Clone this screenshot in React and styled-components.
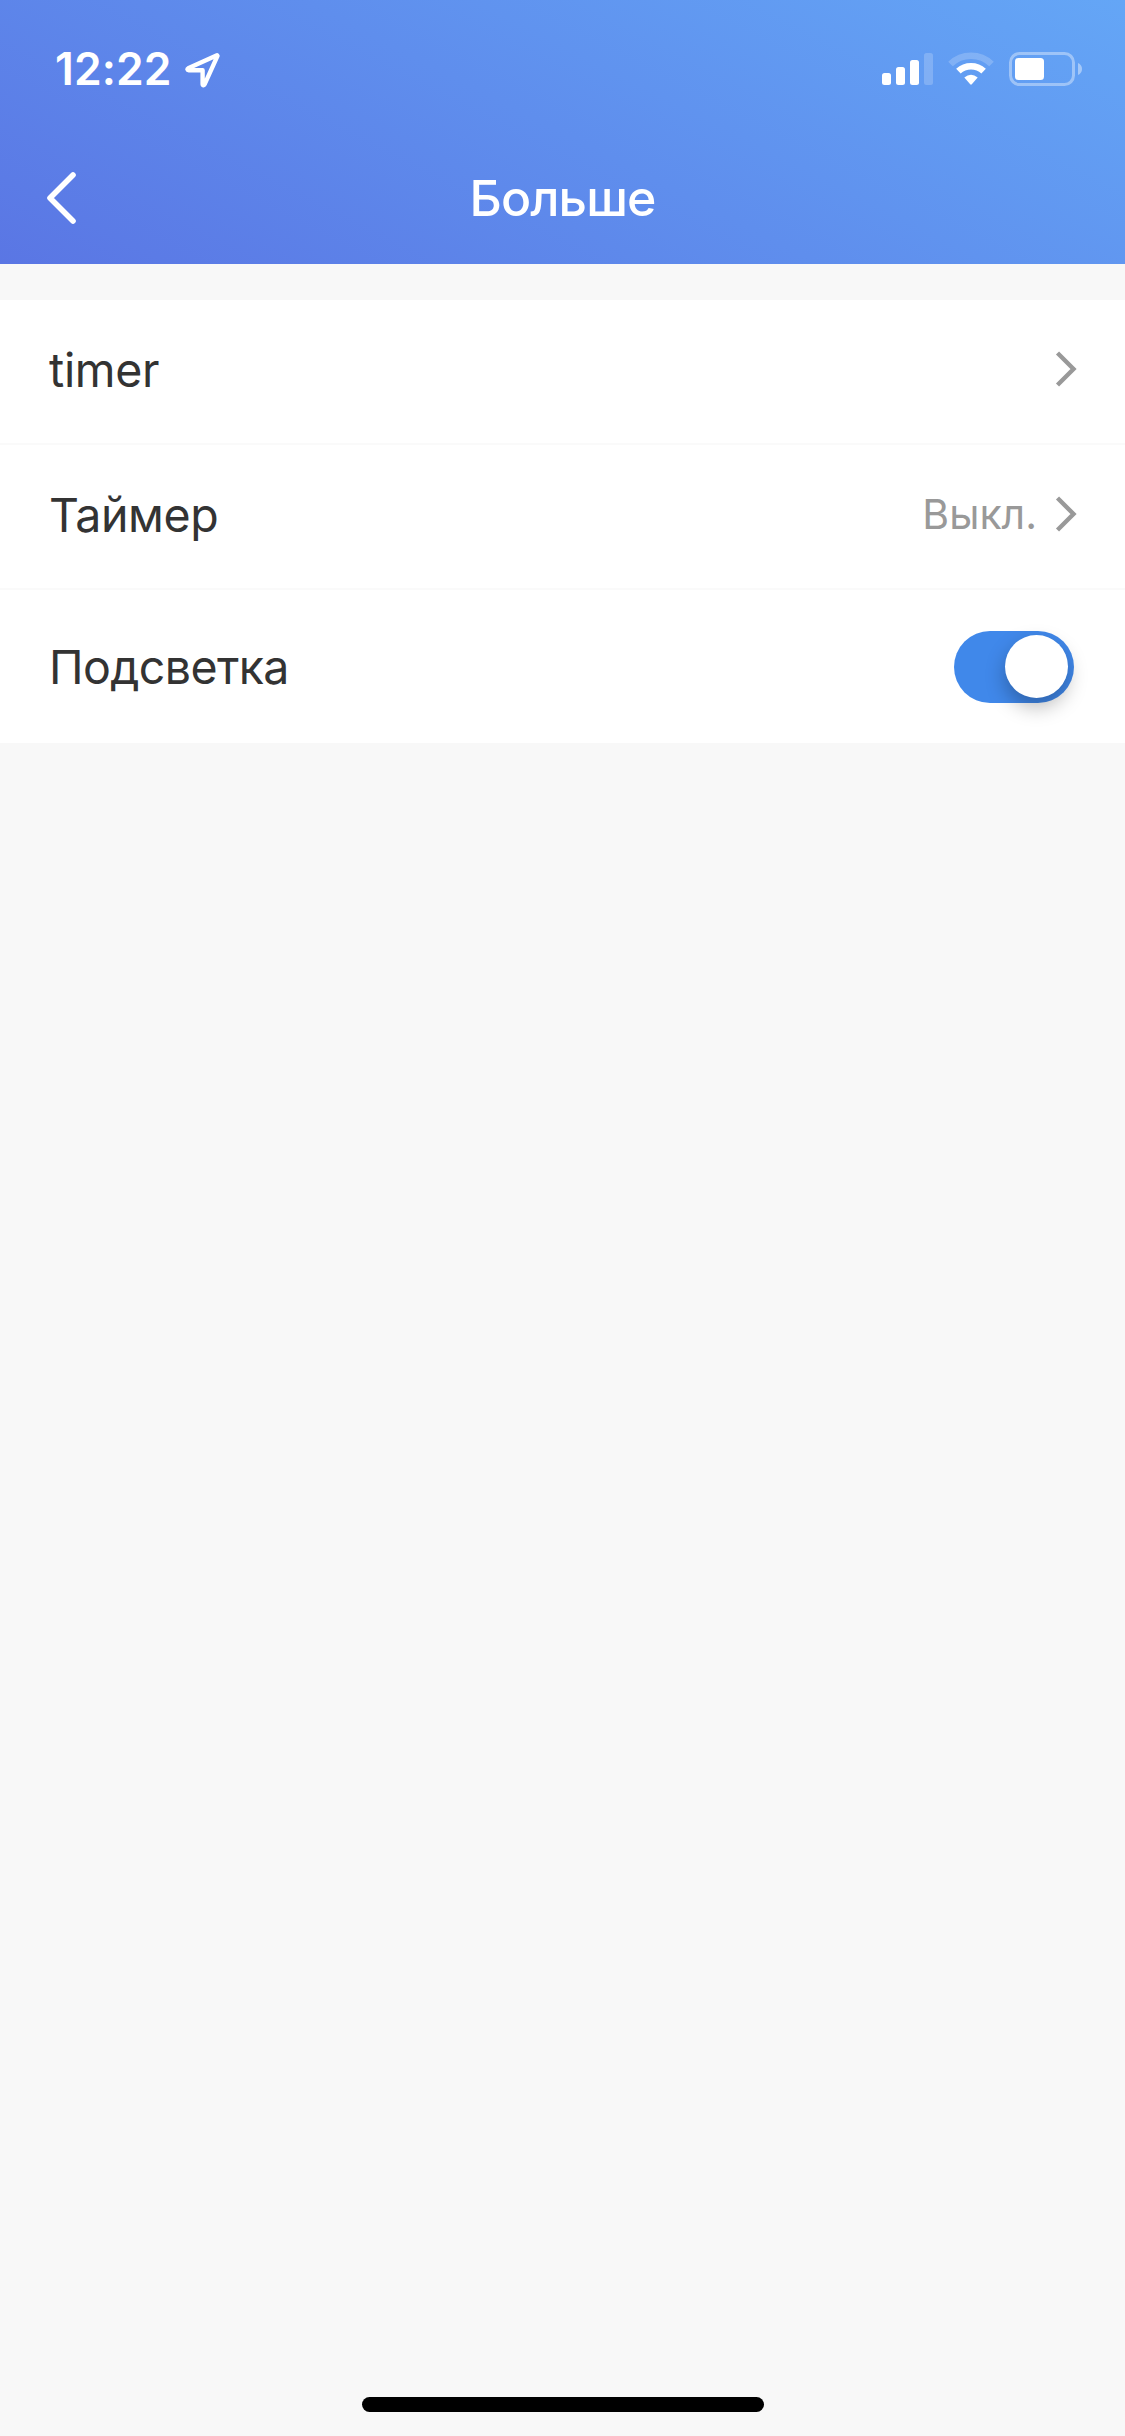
import React from "react";
import styled, { createGlobalStyle } from "styled-components";

const GlobalStyle = createGlobalStyle`
  * { box-sizing: border-box; }
  body {
    margin: 0;
    background: #f8f8f8;
    font-family: Inter, "Liberation Sans", sans-serif;
  }
  svg { display: block; flex: none; }
`;

const Screen = styled.div`
  display: flex;
  flex-direction: column;
  width: 1125px;
  height: 2436px;
  background: #f8f8f8;
`;

const Header = styled.header`
  height: 264px;
  color: #fff;
  background: linear-gradient(27deg, #5a76e4 0%, #64a6f6 100%);
`;

const StatusBar = styled.div`
  display: flex;
  justify-content: space-between;
  height: 132px;
  padding: 52px 43px 0 55px;
`;

const StatusLeft = styled.div`
  display: flex;
  align-items: flex-start;
  gap: 14px;
`;

const Time = styled.div`
  width: 116px;
  font-size: 44.5px;
  font-weight: 600;
  line-height: 34px;
  letter-spacing: 0.1px;
  white-space: nowrap;
`;

const StatusRight = styled.div`
  display: flex;
  align-items: flex-start;
  gap: 15px;
`;

const NavBar = styled.div`
  display: grid;
  grid-template-columns: 76px 1fr 76px;
  height: 132px;
  padding: 0 46px;
`;

const BackButton = styled.button`
  display: flex;
  padding: 40px 0 0;
  border: 0;
  background: none;
  color: inherit;
`;

const Title = styled.h1`
  margin: 0;
  font-size: 50px;
  font-weight: 500;
  line-height: 132px;
  letter-spacing: -0.9px;
  text-align: center;
`;

const List = styled.main`
  margin-top: 36px;
  background: #fff;
`;

const Row = styled.div`
  display: flex;
  align-items: center;
  justify-content: space-between;
  height: ${(p) => p.$height}px;
  padding: 0 48px 0 49px;
  padding-bottom: ${(p) => p.$lift || 0}px;
  border-bottom: ${(p) => (p.$last ? "0" : "2px solid #fafafa")};
`;

const Label = styled.span`
  padding-top: ${(p) => p.$drop || 0}px;
  color: #333;
  font-size: 46.5px;
  line-height: 60px;
  letter-spacing: ${(p) => p.$tracking || 0}px;
`;

const Trailing = styled.div`
  display: flex;
  align-items: center;
  gap: 18px;
`;

const Value = styled.span`
  color: #999;
  font-size: 41px;
  line-height: 52px;
`;

const Switch = styled.button`
  display: flex;
  justify-content: flex-end;
  width: 120px;
  height: 72px;
  margin-right: 3px;
  padding: 4px 6px;
  border: 0;
  border-radius: 36px;
  background: #4088ea;
`;

const Knob = styled.span`
  width: 63px;
  height: 63px;
  border-radius: 50%;
  background: #fff;
  box-shadow: 0 9px 20px rgba(0, 0, 0, 0.28);
`;

const HomeArea = styled.footer`
  display: flex;
  justify-content: center;
  margin-top: auto;
  padding: 0 0 24px 1px;
`;

const HomeIndicator = styled.div`
  width: 402px;
  height: 15px;
  border-radius: 8px;
  background: #000;
`;

const LocationIcon = () => (
  <svg width="36" height="36" viewBox="0 0 36 36">
    <path
      d="M32 3.2 L3.2 16.3 C2 17 2.3 18.2 3.7 18.2 H17.6 V32 C17.6 33.5 19 33.7 19.6 32.4 L32.5 3.8 Z"
      fill="none"
      stroke="#fff"
      strokeWidth="4.4"
      strokeLinejoin="round"
    />
  </svg>
);

const SignalIcon = () => (
  <svg width="51" height="34" viewBox="0 0 51 34" fill="#fff">
    <rect x="0" y="21" width="9" height="12" rx="2.5" />
    <rect x="14" y="15" width="9" height="18" rx="2.5" />
    <rect x="28" y="8" width="9" height="25" rx="2.5" />
    <rect x="42" y="1" width="9" height="32" rx="2.5" opacity="0.2" />
  </svg>
);

const WifiIcon = () => (
  <svg width="46" height="34" viewBox="0 0 46 34">
    <g fill="none" stroke="#fff">
      <path d="M2.5 12 A29.5 29.5 0 0 1 43.5 12" strokeWidth="6.5" opacity="0.2" />
      <path d="M10.4 19.2 A18.2 18.2 0 0 1 35.6 19.2" strokeWidth="6.5" />
    </g>
    <path d="M16.3 25.6 Q23 20 29.7 25.6 L23.8 32.3 Q23 33 22.2 32.3 Z" fill="#fff" />
  </svg>
);

const BatteryIcon = () => (
  <svg width="73" height="34" viewBox="0 0 73 34">
    <rect x="1.5" y="1.5" width="63" height="31" rx="9" fill="none" stroke="#fff" strokeWidth="3" opacity="0.38" />
    <rect x="6" y="6" width="29" height="22" rx="3.5" fill="#fff" />
    <path d="M69 11 Q73 12.8 73 17 Q73 21.2 69 23 Z" fill="#fff" opacity="0.42" />
  </svg>
);

const BackIcon = () => (
  <svg width="32" height="52" viewBox="0 0 32 52">
    <path
      d="M27 3 L4 26 L27 49"
      fill="none"
      stroke="#fff"
      strokeWidth="5.6"
      strokeLinecap="round"
      strokeLinejoin="round"
    />
  </svg>
);

const ChevronIcon = () => (
  <svg width="22" height="38" viewBox="0 0 22 38">
    <path d="M2.5 3 L18.5 19 L2.5 35" fill="none" stroke="#999" strokeWidth="4.4" />
  </svg>
);

export default function App() {
  return (
    <>
      <GlobalStyle />
      <Screen>
        <Header>
          <StatusBar>
            <StatusLeft>
              <Time>12:22</Time>
              <LocationIcon />
            </StatusLeft>
            <StatusRight>
              <SignalIcon />
              <WifiIcon />
              <BatteryIcon />
            </StatusRight>
          </StatusBar>
          <NavBar>
            <BackButton aria-label="Назад">
              <BackIcon />
            </BackButton>
            <Title>Больше</Title>
          </NavBar>
        </Header>
        <List>
          <Row $height={145} $lift={5}>
            <Label $drop={2} $tracking={-0.3}>timer</Label>
            <Trailing>
              <ChevronIcon />
            </Trailing>
          </Row>
          <Row $height={145} $lift={5}>
            <Label $drop={2} $tracking={-0.4}>Таймер</Label>
            <Trailing>
              <Value>Выкл.</Value>
              <ChevronIcon />
            </Trailing>
          </Row>
          <Row $height={153} $last>
            <Label $tracking={-0.6}>Подсветка</Label>
            <Switch role="switch" aria-checked="true" aria-label="Подсветка">
              <Knob />
            </Switch>
          </Row>
        </List>
        <HomeArea>
          <HomeIndicator />
        </HomeArea>
      </Screen>
    </>
  );
}
